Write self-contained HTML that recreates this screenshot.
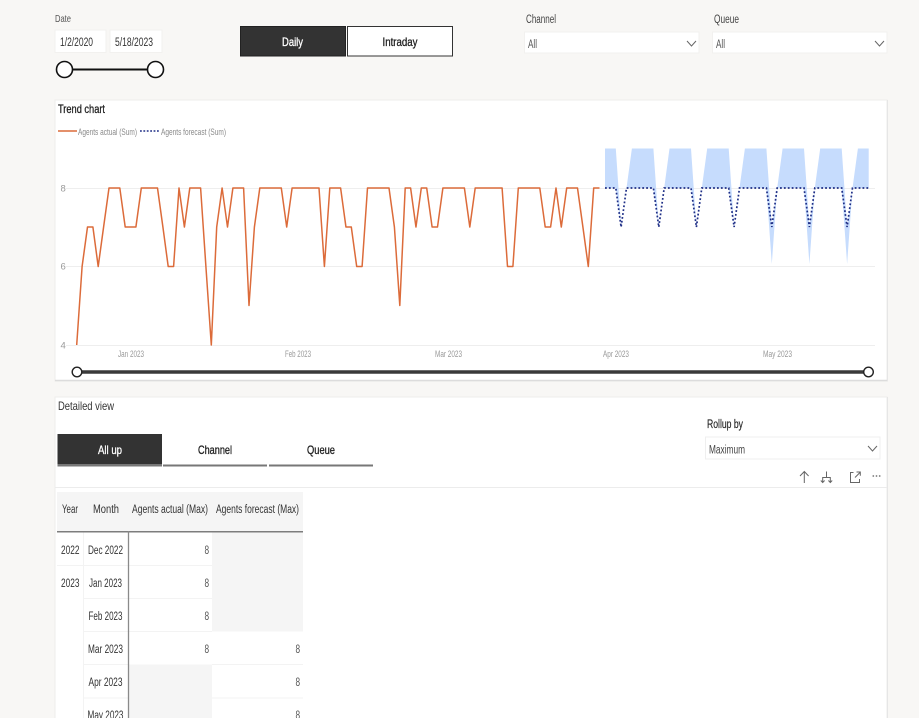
<!DOCTYPE html>
<html lang="en"><head><meta charset="utf-8"><title>Dashboard</title>
<style>
html,body{margin:0;padding:0;width:919px;height:718px;overflow:hidden;background:#f8f7f5}
svg{display:block;filter:blur(.3px)}
text{font-family:"Liberation Sans",sans-serif;font-size:11.5px;fill:#333}
.g{fill:#999;font-size:9.5px}
.l{fill:#8a8a8a;font-size:9.5px}
.b{font-size:12px;fill:#222;stroke:#222;stroke-width:.3px}
.w{font-size:12px;fill:#fff;stroke:#fff;stroke-width:.3px}
.v{fill:#555}
</style></head><body>
<svg width="919" height="718" viewBox="0 0 919 718" xmlns="http://www.w3.org/2000/svg">
<rect width="919" height="718" fill="#f8f7f5"/>

<!-- Date -->
<text x="55" y="22" style="font-size:10.5px;fill:#555" textLength="16" lengthAdjust="spacingAndGlyphs">Date</text>
<rect x="55" y="30" width="51" height="22.5" fill="#fff" stroke="#f2f1ef"/>
<rect x="110" y="30" width="52" height="22.5" fill="#fff" stroke="#f2f1ef"/>
<text x="60" y="46" textLength="33" lengthAdjust="spacingAndGlyphs">1/2/2020</text>
<text x="115" y="46" textLength="38" lengthAdjust="spacingAndGlyphs">5/18/2023</text>
<line x1="72" y1="69.5" x2="148" y2="69.5" stroke="#111" stroke-width="2"/>
<circle cx="64.5" cy="69.5" r="8" fill="#fff" stroke="#111" stroke-width="1.6"/>
<circle cx="155.5" cy="69.5" r="8" fill="#fff" stroke="#111" stroke-width="1.6"/>

<!-- Toggle -->
<rect x="240.5" y="26.5" width="105" height="29.5" fill="#333" stroke="#222"/>
<text x="282" y="46" class="w" textLength="21" lengthAdjust="spacingAndGlyphs">Daily</text>
<rect x="347.5" y="26.5" width="105" height="29.5" fill="#fff" stroke="#333"/>
<text x="382.5" y="46" class="b" textLength="35" lengthAdjust="spacingAndGlyphs">Intraday</text>

<!-- Slicers -->
<text x="526" y="23" style="fill:#444" textLength="30" lengthAdjust="spacingAndGlyphs">Channel</text>
<rect x="524.5" y="32" width="174.5" height="21" fill="#fff" stroke="#f2f1ef"/>
<text x="528" y="48" style="fill:#555" textLength="9" lengthAdjust="spacingAndGlyphs">All</text>
<path d="M687 41 L691.5 46 L696 41" fill="none" stroke="#666"/>
<text x="714" y="23" style="fill:#444" textLength="25" lengthAdjust="spacingAndGlyphs">Queue</text>
<rect x="712.5" y="32" width="174.5" height="21" fill="#fff" stroke="#f2f1ef"/>
<text x="716" y="48" style="fill:#555" textLength="9" lengthAdjust="spacingAndGlyphs">All</text>
<path d="M875 41 L879.5 46 L884 41" fill="none" stroke="#666"/>

<!-- Trend card -->
<rect x="55" y="100" width="832" height="281" fill="#fff" stroke="#eeedeb"/>
<line x1="55" y1="380.5" x2="888" y2="380.5" stroke="#dcdcdc" stroke-width="1.5"/>
<line x1="887.5" y1="100" x2="887.5" y2="381" stroke="#e6e6e6"/>
<text x="58" y="113" class="b" textLength="47" lengthAdjust="spacingAndGlyphs">Trend chart</text>
<line x1="58" y1="131" x2="77" y2="131" stroke="#dc6b3a" stroke-width="1.6"/>
<text x="78" y="135" class="l" textLength="59" lengthAdjust="spacingAndGlyphs">Agents actual (Sum)</text>
<line x1="140" y1="131" x2="159" y2="131" stroke="#1e2e86" stroke-width="1.6" stroke-dasharray="1.8 1.6"/>
<text x="161" y="135" class="l" textLength="65" lengthAdjust="spacingAndGlyphs">Agents forecast (Sum)</text>

<line x1="66" y1="188.5" x2="875" y2="188.5" stroke="#eeeeee"/>
<line x1="66" y1="266.5" x2="875" y2="266.5" stroke="#eeeeee"/>
<line x1="66" y1="345.5" x2="875" y2="345.5" stroke="#eeeeee"/>
<text x="60.5" y="191.5" class="g">8</text>
<text x="60.5" y="269.5" class="g">6</text>
<text x="60.5" y="348.5" class="g">4</text>
<text x="118" y="357" class="g" textLength="26" lengthAdjust="spacingAndGlyphs">Jan 2023</text>
<text x="285" y="357" class="g" textLength="26" lengthAdjust="spacingAndGlyphs">Feb 2023</text>
<text x="435" y="357" class="g" textLength="27" lengthAdjust="spacingAndGlyphs">Mar 2023</text>
<text x="603" y="357" class="g" textLength="26" lengthAdjust="spacingAndGlyphs">Apr 2023</text>
<text x="763" y="357" class="g" textLength="29" lengthAdjust="spacingAndGlyphs">May 2023</text>

<!-- Forecast band -->
<polygon fill="#c6dcfd" points="605,148.5 615.8,148.5 621.1,227 626.5,188 631.9,148.5 653.4,148.5 658.8,227 664.2,188 669.5,148.5 691,148.5 696.4,227 701.8,188 707.2,148.5 728.7,148.5 734.1,227 739.5,188 744.9,148.5 766.4,148.5 771.8,227 777.2,188 782.6,148.5 804,148.5 809.4,227 814.8,188 820.2,148.5 841.7,148.5 847.1,227 852.5,188 857.9,148.5 868.7,148.5 868.7,188 852.5,188 847.1,264 841.7,188 814.8,188 809.4,264 804,188 777.2,188 771.8,264 766.4,188 739.5,188 734.1,227 728.7,188 701.8,188 696.4,227 691,188 664.2,188 658.8,227 653.4,188 626.5,188 621.1,227 615.8,188 605,188"/>

<!-- Actual -->
<polyline fill="none" stroke="#dc6b3a" stroke-width="1.5" stroke-linejoin="round" points="76.7,345 82.1,266.5 87.5,227 92.9,227 98.2,266.5 103.6,227 109,188 119.8,188 125.2,227 135.9,227 141.3,188 157.5,188 162.9,227 168.2,266.5 173.6,266.5 179,188 184.4,227 189.8,188 200.6,188 205.9,266.5 211.3,345 216.7,227 222.1,188 227.5,227 232.9,188 243.6,188 249,305.5 254.4,227 259.8,188 281.3,188 286.7,227 292.1,188 319,188 324.4,266.5 329.8,188 340.6,188 345.95,227 351.3,227 356.7,266.5 362.1,266.5 367.5,188 389,188 394.4,227 399.8,305.5 405.2,188 410.6,188 415.96,227 421.3,188 426.7,188 432.1,227 437.5,227 442.9,188 464.4,188 469.8,227 475.2,188 502.1,188 507.5,266.5 512.9,266.5 518.3,188 539.8,188 545.2,227 550.6,227 556,188 561.3,227 566.7,188 577.5,188 582.9,227 588.3,266.5 593.7,188 599.5,188"/>

<!-- Forecast -->
<polyline fill="none" stroke="#1e2e86" stroke-width="1.7" stroke-dasharray="1.8 2.1" points="605,188 615.8,188 621.1,227 626.5,188 653.4,188 658.8,227 664.2,188 691,188 696.4,227 701.8,188 728.7,188 734.1,227 739.5,188 766.4,188 771.8,227 777.2,188 804,188 809.4,227 814.8,188 841.7,188 847.1,227 852.5,188 868.7,188"/>

<!-- Range slider -->
<line x1="77" y1="372" x2="868" y2="372" stroke="#3a3a3a" stroke-width="3.5"/>
<circle cx="77" cy="372" r="4.8" fill="#fff" stroke="#222" stroke-width="1.4"/>
<circle cx="868.5" cy="372" r="4.8" fill="#fff" stroke="#222" stroke-width="1.4"/>

<!-- Detailed card -->
<rect x="55" y="397" width="832" height="322" fill="#fff" stroke="#eeedeb"/>
<line x1="887.5" y1="397" x2="887.5" y2="718" stroke="#e6e6e6"/>
<text x="58" y="410" style="fill:#333;font-size:12px" textLength="56" lengthAdjust="spacingAndGlyphs">Detailed view</text>

<rect x="57.5" y="434" width="104.5" height="30" fill="#333"/>
<rect x="57.5" y="464" width="104.5" height="2.5" fill="#777"/>
<rect x="163" y="464.5" width="104" height="2" fill="#777"/>
<rect x="269" y="464.5" width="104" height="2" fill="#777"/>
<text x="98" y="454" class="w" textLength="24" lengthAdjust="spacingAndGlyphs">All up</text>
<text x="198" y="454" class="b" textLength="34" lengthAdjust="spacingAndGlyphs">Channel</text>
<text x="307" y="454" class="b" textLength="28" lengthAdjust="spacingAndGlyphs">Queue</text>

<text x="707" y="428" style="fill:#222;stroke:#222;stroke-width:.15px" textLength="36" lengthAdjust="spacingAndGlyphs">Rollup by</text>
<rect x="705.5" y="437" width="174.5" height="22" fill="#fff" stroke="#efefef"/>
<text x="709" y="453.5" style="fill:#444" textLength="36" lengthAdjust="spacingAndGlyphs">Maximum</text>
<path d="M868 446 L872.5 451 L877 446" fill="none" stroke="#666"/>

<!-- Toolbar icons -->
<g fill="none" stroke="#666" stroke-width="1">
<path d="M804.3 483 V471.5 M800 476 L804.3 471.5 L808.6 476"/>
<path d="M826.5 471.5 V477.5 M822.7 482 V477.5 H830.3 V482 M820.8 480.5 L822.7 482.5 L824.6 480.5 M828.4 480.5 L830.3 482.5 L832.2 480.5"/>
<path d="M853.5 472.5 H850.5 V482.5 H855 M855 482.5 H859.5 V479 M855 477.5 L860 472.5 M856.5 472 H860.3 V475.8"/>
</g>
<g fill="#777"><circle cx="873.3" cy="476" r=".9"/><circle cx="876.5" cy="476" r=".9"/><circle cx="879.7" cy="476" r=".9"/></g>
<line x1="55" y1="487.5" x2="887" y2="487.5" stroke="#ececec"/>

<!-- Table -->
<rect x="57" y="492" width="246" height="39" fill="#f5f5f5"/>
<rect x="212" y="532" width="91" height="99.5" fill="#f5f5f5"/>
<rect x="129" y="664.5" width="83" height="54" fill="#f5f5f5"/>
<g stroke="#f3f3f3">
<line x1="57" y1="565.5" x2="83" y2="565.5"/>
<line x1="83.5" y1="532" x2="83.5" y2="718"/>
<line x1="83" y1="565.5" x2="212" y2="565.5"/>
<line x1="83" y1="598.5" x2="212" y2="598.5"/>
<line x1="83" y1="631.5" x2="212" y2="631.5"/>
<line x1="83" y1="664.5" x2="129" y2="664.5"/>
<line x1="212" y1="664.5" x2="303" y2="664.5"/>
<line x1="83" y1="698" x2="129" y2="698"/>
<line x1="212" y1="698" x2="303" y2="698"/>
</g>
<line x1="57" y1="531.7" x2="303" y2="531.7" stroke="#7d7d7d" stroke-width="1.5"/>
<line x1="128.5" y1="531" x2="128.5" y2="718" stroke="#8a8a8a" stroke-width="1.3"/>

<text x="62" y="513" textLength="16" lengthAdjust="spacingAndGlyphs">Year</text>
<text x="93" y="513" textLength="26" lengthAdjust="spacingAndGlyphs">Month</text>
<text x="132" y="513" textLength="76" lengthAdjust="spacingAndGlyphs">Agents actual (Max)</text>
<text x="216" y="513" textLength="83" lengthAdjust="spacingAndGlyphs">Agents forecast (Max)</text>

<text x="61" y="554" textLength="18.5" lengthAdjust="spacingAndGlyphs">2022</text>
<text x="61" y="587" textLength="18.5" lengthAdjust="spacingAndGlyphs">2023</text>
<text x="88" y="554" textLength="35" lengthAdjust="spacingAndGlyphs">Dec 2022</text>
<text x="89" y="587" textLength="33" lengthAdjust="spacingAndGlyphs">Jan 2023</text>
<text x="88.5" y="620" textLength="34" lengthAdjust="spacingAndGlyphs">Feb 2023</text>
<text x="88" y="653" textLength="35" lengthAdjust="spacingAndGlyphs">Mar 2023</text>
<text x="88.5" y="686" textLength="34" lengthAdjust="spacingAndGlyphs">Apr 2023</text>
<text x="87.5" y="719" textLength="36" lengthAdjust="spacingAndGlyphs">May 2023</text>

<text x="204.5" y="554" class="v" textLength="4.6" lengthAdjust="spacingAndGlyphs">8</text>
<text x="204.5" y="587" class="v" textLength="4.6" lengthAdjust="spacingAndGlyphs">8</text>
<text x="204.5" y="620" class="v" textLength="4.6" lengthAdjust="spacingAndGlyphs">8</text>
<text x="204.5" y="653" class="v" textLength="4.6" lengthAdjust="spacingAndGlyphs">8</text>
<text x="295.5" y="653" class="v" textLength="4.6" lengthAdjust="spacingAndGlyphs">8</text>
<text x="295.5" y="686" class="v" textLength="4.6" lengthAdjust="spacingAndGlyphs">8</text>
<text x="295.5" y="719" class="v" textLength="4.6" lengthAdjust="spacingAndGlyphs">8</text>
</svg>
</body></html>
